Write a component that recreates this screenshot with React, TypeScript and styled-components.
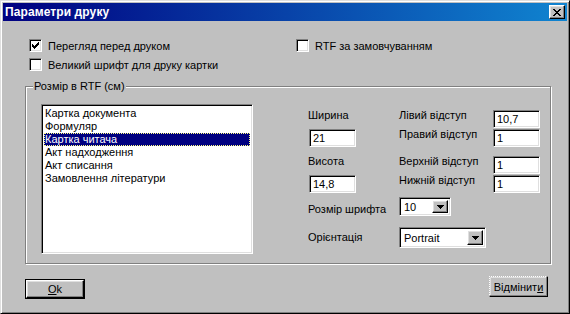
import React from 'react';
import styled, { createGlobalStyle, css } from 'styled-components';

const Global = createGlobalStyle`
  html, body { margin: 0; padding: 0; background: #c0c0c0; }
  body {
    font-family: "Liberation Sans", Arial, sans-serif;
    font-size: 11px;
    color: #000;
  }
  * { box-sizing: border-box; }
`;

const raised = css`
  border: 1px solid;
  border-color: #fff #000 #000 #fff;
  box-shadow: inset -1px -1px #808080, inset 1px 1px #dfdfdf;
`;

const sunken = css`
  border: 1px solid;
  border-color: #808080 #fff #fff #808080;
  box-shadow: inset 1px 1px #000, inset -1px -1px #dfdfdf;
`;

const Window = styled.div`
  width: 570px;
  height: 314px;
  background: #c0c0c0;
  border: 1px solid;
  border-color: #dfdfdf #000 #000 #dfdfdf;
  box-shadow: inset 1px 1px #fff, inset -1px -1px #808080;
  padding: 2px;
  display: flex;
  flex-direction: column;
`;

const TitleBar = styled.div`
  height: 18px;
  background: linear-gradient(90deg, #000080 0%, #1084d0 100%);
  display: flex;
  align-items: center;
  justify-content: space-between;
  padding: 0 2px 0 2px;
`;

const Title = styled.span`
  color: #fff;
  font-weight: bold;
  font-size: 12px;
  letter-spacing: 0.1px;
`;

const CloseButton = styled.div`
  ${raised};
  width: 16px;
  height: 14px;
  background: #c0c0c0;
  display: flex;
  align-items: center;
  justify-content: center;
`;

const Body = styled.div`
  flex: 1;
  display: flex;
  flex-direction: column;
  padding: 15px 16px 0 22px;
`;

const Options = styled.div`
  display: grid;
  grid-template-columns: 267px auto;
  grid-auto-rows: 19px;
  padding-left: 4px;
`;

const Option = styled.label<{ $col?: number }>`
  display: flex;
  align-items: center;
  gap: 6px;
  grid-column: ${(p) => p.$col ?? 1};
`;

const CheckBox = styled.span`
  ${sunken};
  width: 13px;
  height: 13px;
  background: #fff;
  display: flex;
  align-items: center;
  justify-content: center;
`;

const Group = styled.div`
  position: relative;
  margin-top: 12px;
  height: 178px;
  border: 1px solid #808080;
  box-shadow: inset 1px 1px #fff, 1px 1px #fff;
  display: flex;
  align-items: flex-start;
  padding: 17px 0 0 15px;
`;

const Legend = styled.span`
  position: absolute;
  top: -7px;
  left: 7px;
  background: #c0c0c0;
  padding: 0 1px 0 1px;
  line-height: 13px;
`;

const ListBox = styled.ul`
  ${sunken};
  margin: 0;
  padding: 2px;
  list-style: none;
  width: 212px;
  height: 150px;
  background: #fff;
`;

const ListItem = styled.li<{ $selected?: boolean }>`
  height: 13px;
  line-height: 13px;
  padding-left: 1px;
  white-space: nowrap;
  ${(p) =>
    p.$selected &&
    css`
      background: #000080;
      color: #fff;
      outline: 1px dotted #ffff80;
      outline-offset: -1px;
    `}
`;

const Panel = styled.div`
  margin: 5px 0 0 55px;
  display: grid;
  grid-template-columns: 91px 93px 48px;
  grid-template-rows: 19px 27px 19px 23px 30px 21px;
  align-items: start;
`;

const Label = styled.span<{ $offset?: number }>`
  line-height: 13px;
  margin-top: ${(p) => p.$offset ?? 0}px;
  white-space: nowrap;
`;

const Field = styled.div<{ $width?: number }>`
  ${sunken};
  margin-top: 1px;
  margin-left: 1px;
  width: ${(p) => p.$width ?? 47}px;
  height: 18px;
  background: #fff;
  padding: 0 3px;
  line-height: 16px;
`;

const Combo = styled.div<{ $width: number; $height: number }>`
  ${sunken};
  grid-column: 2 / span 2;
  width: ${(p) => p.$width}px;
  height: ${(p) => p.$height}px;
  background: #fff;
  display: flex;
  align-items: stretch;
  padding: 2px;
`;

const ComboText = styled.span`
  flex: 1;
  padding-left: 2px;
  display: flex;
  align-items: center;
`;

const ComboButton = styled.span<{ $w: number }>`
  ${raised};
  width: ${(p) => p.$w}px;
  background: #c0c0c0;
  display: flex;
  align-items: center;
  justify-content: center;
`;

const ButtonRow = styled.div`
  display: flex;
  justify-content: space-between;
  align-items: flex-start;
  padding: 12px 3px 0 0;
`;

const DefaultButton = styled.div`
  margin-top: 3px;
  width: 60px;
  height: 20px;
  border: 1px solid #000;
  display: flex;
`;

const ButtonFace = styled.div`
  ${raised};
  flex: 1;
  display: flex;
  align-items: center;
  justify-content: center;
  background: #c0c0c0;
`;

const CancelButton = styled.div`
  ${raised};
  border-top-style: dotted;
  border-left-style: dotted;
  width: 59px;
  height: 21px;
  display: flex;
  align-items: center;
  justify-content: center;
  background: #c0c0c0;
`;

const Check = () => (
  <svg width="7" height="7" viewBox="0 0 7 7" shapeRendering="crispEdges">
    <path d="M0 2h1v3h-1z M1 3h1v3h-1z M2 4h1v3h-1z M3 3h1v3h-1z M4 2h1v3h-1z M5 1h1v3h-1z M6 0h1v3h-1z" fill="#000" />
  </svg>
);

const Arrow = () => (
  <svg width="7" height="4" viewBox="0 0 7 4" shapeRendering="crispEdges">
    <path d="M0 0h7v1h-7z M1 1h5v1h-5z M2 2h3v1h-3z M3 3h1v1h-1z" fill="#000" />
  </svg>
);

const CloseX = () => (
  <svg width="8" height="7" viewBox="0 0 8 7" shapeRendering="crispEdges">
    <path
      d="M0 0h2v1h-2z M6 0h2v1h-2z M1 1h2v1h-2z M5 1h2v1h-2z M2 2h4v1h-4z M3 3h2v1h-2z M2 4h4v1h-4z M1 5h2v1h-2z M5 5h2v1h-2z M0 6h2v1h-2z M6 6h2v1h-2z"
      fill="#000"
    />
  </svg>
);

const items = [
  'Картка документа',
  'Формуляр',
  'Картка читача',
  'Акт надходження',
  'Акт списання',
  'Замовлення літератури',
];

export default function App() {
  return (
    <>
      <Global />
      <Window>
        <TitleBar>
          <Title>Параметри друку</Title>
          <CloseButton>
            <CloseX />
          </CloseButton>
        </TitleBar>
        <Body>
          <Options>
            <Option>
              <CheckBox>
                <Check />
              </CheckBox>
              Перегляд перед друком
            </Option>
            <Option $col={2}>
              <CheckBox />
              RTF за замовчуванням
            </Option>
            <Option>
              <CheckBox />
              Великий шрифт для друку картки
            </Option>
          </Options>
          <Group>
            <Legend>Розмір в RTF (см)</Legend>
            <ListBox>
              {items.map((t, i) => (
                <ListItem key={t} $selected={i === 2}>
                  {t}
                </ListItem>
              ))}
            </ListBox>
            <Panel>
              <Label>Ширина</Label>
              <Label>Лівий відступ</Label>
              <Field>10,7</Field>

              <Field>21</Field>
              <Label>Правий відступ</Label>
              <Field>1</Field>

              <Label>Висота</Label>
              <Label>Верхній відступ</Label>
              <Field>1</Field>

              <Field>14,8</Field>
              <Label>Нижній відступ</Label>
              <Field>1</Field>

              <Label $offset={6}>Розмір шрифта</Label>
              <Combo $width={52} $height={19}>
                <ComboText>10</ComboText>
                <ComboButton $w={16}>
                  <Arrow />
                </ComboButton>
              </Combo>

              <Label $offset={4}>Орієнтація</Label>
              <Combo $width={87} $height={21}>
                <ComboText>Portrait</ComboText>
                <ComboButton $w={16}>
                  <Arrow />
                </ComboButton>
              </Combo>
            </Panel>
          </Group>
          <ButtonRow>
            <DefaultButton>
              <ButtonFace>
                <span>
                  <u>O</u>k
                </span>
              </ButtonFace>
            </DefaultButton>
            <CancelButton>
              <span>
                Відмінит<u>и</u>
              </span>
            </CancelButton>
          </ButtonRow>
        </Body>
      </Window>
    </>
  );
}
